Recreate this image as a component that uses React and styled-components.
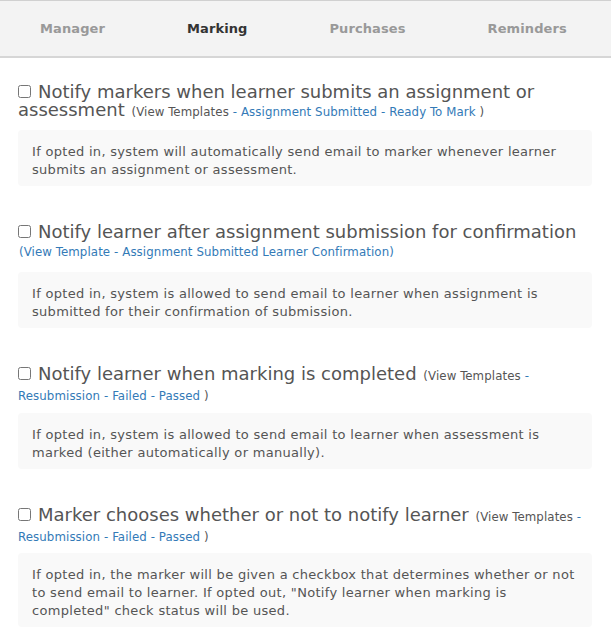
import React from "react";
import styled, { createGlobalStyle } from "styled-components";

const Global = createGlobalStyle`
  html, body { margin: 0; padding: 0; background: #fff; }
  body { font-family: "DejaVu Sans", Verdana, sans-serif; color: #555; }
`;

const TabBar = styled.nav`
  display: flex;
  height: 55px;
  background: #f3f3f3;
  border-top: 1px solid #d0d0d0;
  border-bottom: 2px solid #d6d6d6;
`;

const Tab = styled.a`
  display: flex;
  align-items: center;
  padding: 0 41px;
  font-family: "DejaVu Sans", Verdana, sans-serif;
  font-size: 13px;
  font-weight: bold;
  letter-spacing: 0.1px;
  color: ${(p) => (p.$active ? "#333" : "#999")};
  text-decoration: none;
  &:first-child { padding-left: 40px; }
`;

const Content = styled.main`
  padding: 25px 19px 0 18px;
  display: flex;
  flex-direction: column;
  gap: 37px;
`;

const Section = styled.section`
  display: flex;
  flex-direction: column;
  gap: ${(p) => p.$gap}px;
`;

const Heading = styled.label`
  display: block;
  font-size: 18px;
  line-height: 18px;
  color: #555;
`;

const Check = styled.input`
  width: 13px;
  height: 13px;
  margin: 0 7px 0 0;
  vertical-align: baseline;
  accent-color: #888;
`;

const Links = styled.span`
  font-family: "DejaVu Sans Condensed", Tahoma, sans-serif;
  font-size: 13.1px;
  letter-spacing: 0.1px;
  color: #555;
  margin-left: 1px;
`;

const Link = styled.a`
  color: #337ab7;
  text-decoration: none;
`;

const Note = styled.div`
  background: #f9f9f9;
  border-radius: 4px;
  padding: 13px 14px 7px;
  font-size: 13px;
  line-height: 18px;
  letter-spacing: 0.3px;
  color: #555;
`;

const sections = [
  {
    title: "Notify markers when learner submits an assignment or assessment",
    prefix: "(View Templates ",
    links: ["- Assignment Submitted", " - Ready To Mark"],
    suffix: " )",
    gap: 9,
    note: "If opted in, system will automatically send email to marker whenever learner submits an assignment or assessment.",
  },
  {
    title: "Notify learner after assignment submission for confirmation",
    allLink: "(View Template - Assignment Submitted Learner Confirmation)",
    gap: 11,
    note: "If opted in, system is allowed to send email to learner when assignment is submitted for their confirmation of submission.",
  },
  {
    title: "Notify learner when marking is completed",
    prefix: "(View Templates ",
    links: ["- Resubmission", " - Failed", " - Passed"],
    suffix: " )",
    gap: 8,
    note: "If opted in, system is allowed to send email to learner when assessment is marked (either automatically or manually).",
  },
  {
    title: "Marker chooses whether or not to notify learner",
    prefix: "(View Templates ",
    links: ["- Resubmission", " - Failed", " - Passed"],
    suffix: " )",
    gap: 7,
    note: 'If opted in, the marker will be given a checkbox that determines whether or not to send email to learner. If opted out, "Notify learner when marking is completed" check status will be used.',
  },
];

export default function App() {
  return (
    <>
      <Global />
      <TabBar>
        <Tab href="#">Manager</Tab>
        <Tab href="#" $active>Marking</Tab>
        <Tab href="#">Purchases</Tab>
        <Tab href="#">Reminders</Tab>
      </TabBar>
      <Content>
        {sections.map((s, i) => (
          <Section key={i} $gap={s.gap}>
            <Heading>
              <Check type="checkbox" />
              {s.title}{" "}
              {s.allLink ? (
                <Links>
                  <Link href="#">{s.allLink}</Link>
                </Links>
              ) : (
                <Links>
                  {s.prefix}
                  {s.links.map((l, j) => (
                    <Link href="#" key={j}>{l}</Link>
                  ))}
                  {s.suffix}
                </Links>
              )}
            </Heading>
            <Note>{s.note}</Note>
          </Section>
        ))}
      </Content>
    </>
  );
}
